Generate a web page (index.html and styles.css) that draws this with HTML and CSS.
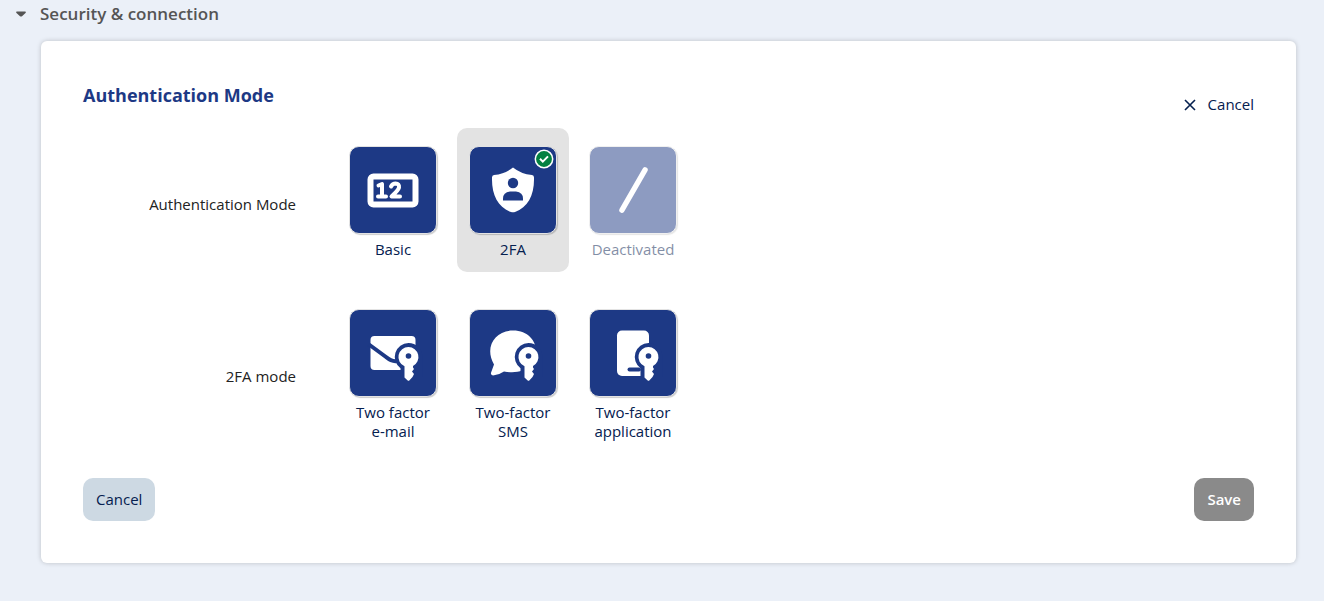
FILE: index.html
```
<!DOCTYPE html>
<html lang="en">
<head>
  <meta charset="UTF-8" />
  <meta name="viewport" content="width=device-width, initial-scale=1" />
  <title>Security &amp; connection</title>
  <link rel="stylesheet" href="styles.css">
</head>
<body>
  <details class="section" open>
    <summary class="section-title">
      <svg class="caret" viewBox="0 0 12 8" aria-hidden="true"><path d="M1.8 1.5h8.4q1.4.3.3 1.4L7 6.2q-1 .8-2 0L1.5 2.9q-1.1-1.1.3-1.4z"/></svg>
      Security &amp; connection
    </summary>

    <form class="card">
      <div class="card-header">
        <h2>Authentication Mode</h2>
        <button type="button" class="link-btn">
          <svg class="cross" viewBox="0 0 12 12" aria-hidden="true"><path d="M1 1l10 10M11 1L1 11"/></svg>
          Cancel
        </button>
      </div>

      <!-- authentication mode -->
      <div class="form-row" role="radiogroup" aria-labelledby="auth-label">
        <div class="row-label" id="auth-label">Authentication Mode</div>
        <div class="options">
          <label class="option">
            <input type="radio" name="auth-mode" value="basic">
            <span class="tile">
              <svg viewBox="0 0 86 86" aria-hidden="true">
                <rect x="20.5" y="29.5" width="45" height="28" rx="3" fill="none" stroke="#fff" stroke-width="6"/>
                <path d="M28.5 38.5l3.500-1.500v12.500M28 49.500h8M41 39.500q1.500-3 4.500-3 4 .3 3.500 4-.5 2.500-7.500 9H50" fill="none" stroke="#fff" stroke-width="4" stroke-linecap="round" stroke-linejoin="round"/>
              </svg>
            </span>
            <span class="option-name">Basic</span>
          </label>
          <label class="option">
            <input type="radio" name="auth-mode" value="2fa" checked>
            <span class="tile">
              <svg viewBox="0 0 86 86" aria-hidden="true">
                <path d="M43 20.5Q51 27 62 28q2 .3 2 2.500C64.5 48 58 60.5 45 65q-2 .7-4 0C28 60.5 21.5 48 22 30.5q0-2.200 2-2.500Q35 27 43 20.5z" fill="#fff"/>
                <circle cx="43" cy="36" r="5.2" fill="#1d3985"/>
                <path d="M33 53.5v-2q0-6 7-7h6q7 1 7 7v2z" fill="#1d3985"/>
              </svg>
              <svg class="check" viewBox="0 0 20 20" aria-hidden="true">
                <circle cx="10" cy="10" r="8.7" fill="#038141" stroke="#fff" stroke-width="1.5"/>
                <path d="M6 9.800l2.800 2.800 5.200-5.200" fill="none" stroke="#fff" stroke-width="2"/>
              </svg>
            </span>
            <span class="option-name">2FA</span>
          </label>
          <label class="option">
            <input type="radio" name="auth-mode" value="off" disabled>
            <span class="tile">
              <svg viewBox="0 0 86 86" aria-hidden="true">
                <path d="M55 23L32 63" stroke="#fff" stroke-width="5.5" stroke-linecap="round"/>
              </svg>
            </span>
            <span class="option-name">Deactivated</span>
          </label>
        </div>
      </div>

      <!-- second factor -->
      <div class="form-row" role="radiogroup" aria-labelledby="mode-label">
        <div class="row-label" id="mode-label">2FA mode</div>
        <div class="options">
          <label class="option">
            <input type="radio" name="tfa-mode" value="email">
            <span class="tile">
              <svg viewBox="0 0 86 86" aria-hidden="true">
                <rect x="20.5" y="26" width="45" height="34" rx="4" fill="#fff"/>
                <path d="M19 34.5l17 12.500q6 5 11 4" fill="none" stroke="#1d3985" stroke-width="4"/>
                <path id="key-gap" d="M58.500 33a14 14 0 0 1 14 14v20H50.500V58.300A14 14 0 0 1 58.500 33z" fill="#1d3985"/>
                <g id="key">
                  <path d="M58.500 37a10 10 0 0 1 4.500 18.900v1.600l1 1.500-2 2.500 2 2.500-1.500 3-3.200 3.500q-.8.7-1.600 0L54.500 67.500V56.200a10 10 0 0 1 4-19.200z" fill="#fff"/>
                  <circle cx="58.5" cy="46" r="2.8" fill="#1d3985"/>
                </g>
              </svg>
            </span>
            <span class="option-name">Two factor<br>e-mail</span>
          </label>
          <label class="option">
            <input type="radio" name="tfa-mode" value="sms">
            <span class="tile">
              <svg viewBox="0 0 86 86" aria-hidden="true">
                <path d="M43 20.500C58 20.500 66 31 66 41c0 14-11 24-32 20.500q-5 3.500-11 4-2.500-.2-2-2.700l3-8.300C14 37 25 20.500 43 20.500z" fill="#fff"/>
                <use href="#key-gap"/>
                <use href="#key"/>
              </svg>
            </span>
            <span class="option-name">Two-factor<br>SMS</span>
          </label>
          <label class="option">
            <input type="radio" name="tfa-mode" value="app">
            <span class="tile">
              <svg viewBox="0 0 86 86" aria-hidden="true">
                <rect x="27" y="20.5" width="32" height="45.5" rx="5" fill="#fff"/>
                <use href="#key-gap"/>
                <path d="M39.5 59.5H49" stroke="#1d3985" stroke-width="4" stroke-linecap="round"/>
                <use href="#key"/>
              </svg>
            </span>
            <span class="option-name">Two-factor<br>application</span>
          </label>
        </div>
      </div>

      <div class="card-footer">
        <button type="button" class="btn">Cancel</button>
        <button type="submit" class="btn btn-save" disabled>Save</button>
      </div>
    </form>
  </details>
</body>
</html>
```
FILE: styles.css
```
* {
  box-sizing: border-box;
}
body {
  font-family: "Open Sans", "Noto Sans", sans-serif;
  font-size: 15px;
  line-height: 19px;
  color: #05204f;
  background-color: #ebf0f8;
  margin: 0;
}
.section {
  padding: 2px 28px 38px 15px;
}
.section-title {
  display: flex;
  align-items: center;
  gap: 13px;
  font-size: 17px;
  line-height: 24px;
  font-weight: 600;
  color: #555;
  cursor: pointer;
  list-style: none;
}
.caret {
  width: 12px;
  height: 8px;
  fill: #555;
}
.card {
  margin: 15px 0 0 26px;
  padding: 42px;
  background-color: #fff;
  border-radius: 6px;
  box-shadow: 0 0 5px rgba(0,0,0,0.2);
}
.card-header {
  display: flex;
  justify-content: space-between;
  align-items: flex-end;
  margin-bottom: 14px;
}
h2 {
  margin: 0;
  padding-bottom: 7px;
  font-size: 18px;
  line-height: 24px;
  font-weight: 700;
  color: #1d3985;
}
.link-btn {
  display: flex;
  align-items: center;
  gap: 12px;
  padding: 0;
  border: none;
  background: none;
  font: inherit;
  font-weight: 500;
  color: #05204f;
  cursor: pointer;
}
.cross {
  width: 12px;
  height: 12px;
  fill: none;
  stroke: #05204f;
  stroke-width: 1.6;
}
.form-row {
  display: flex;
  align-items: center;
  gap: 41px;
  margin-bottom: 19px;
}
.row-label {
  width: 213px;
  padding-top: 8px;
  text-align: right;
  color: #222;
}
.options {
  display: flex;
  gap: 8px;
}
.option {
  position: relative;
  display: flex;
  flex-direction: column;
  align-items: center;
  gap: 6px;
  width: 112px;
  padding: 18px 0 13px;
  border-radius: 10px;
  text-align: center;
  cursor: pointer;
}
.option input {
  position: absolute;
  opacity: 0;
}
.option:has(input:checked) {
  background-color: #e3e3e3;
}
.option:has(input:disabled) {
  opacity: 0.5;
  cursor: default;
}
.tile {
  position: relative;
  width: 88px;
  height: 88px;
  border: 1px solid #e3e3e3;
  border-radius: 10px;
  background-color: #1d3985;
  box-shadow: 1px 1px 1px rgba(0,0,0,0.2);
}
.tile svg {
  display: block;
}
.tile .check {
  position: absolute;
  top: 2px;
  right: 2px;
  width: 20px;
  height: 20px;
}
.card-footer {
  display: flex;
  justify-content: space-between;
  margin-top: 24px;
}
.btn {
  padding: 12px 13px;
  border: none;
  border-radius: 10px;
  background-color: #cdd9e3;
  font: inherit;
  font-weight: 500;
  color: #05204f;
  cursor: pointer;
}
.btn-save {
  background-color: #8a8a8a;
  font-weight: 600;
  color: #fff;
}
```
